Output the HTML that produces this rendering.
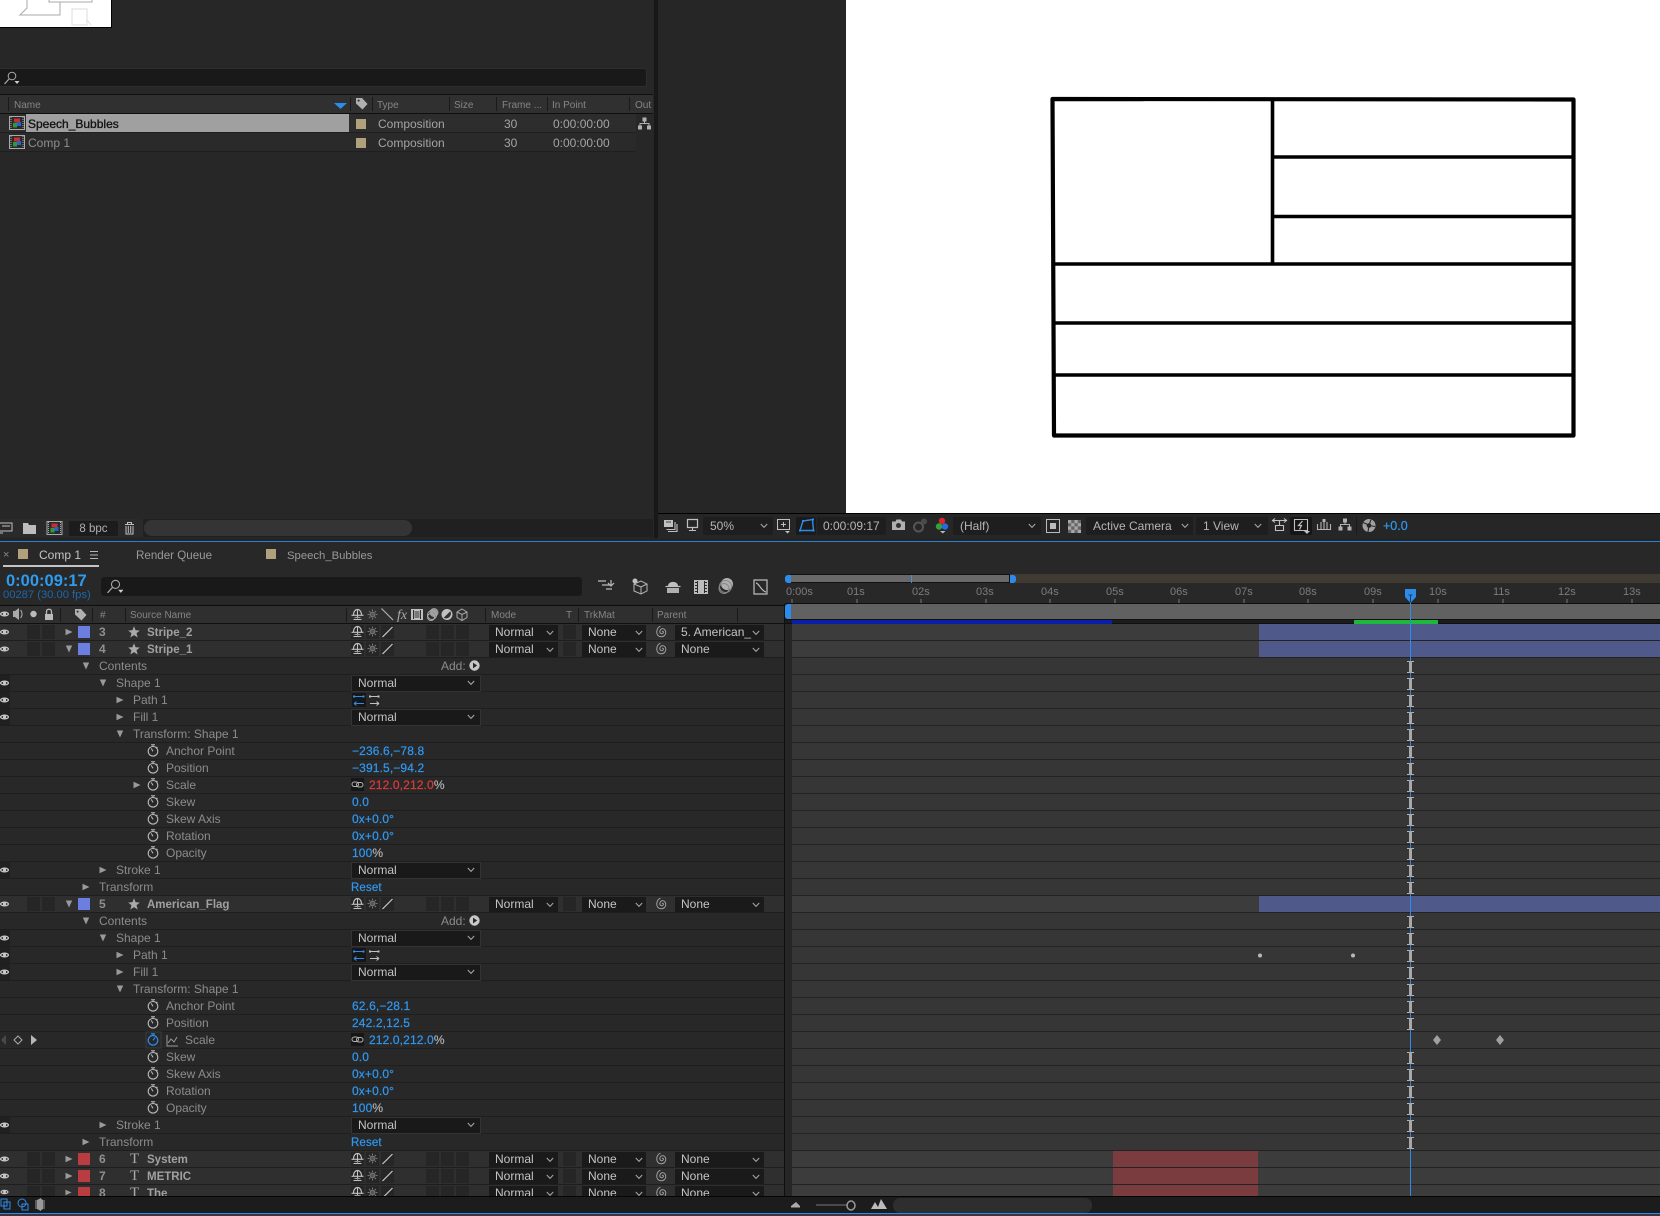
<!DOCTYPE html>
<html><head><meta charset="utf-8"><style>
html,body{margin:0;padding:0;background:#262626}
#p{position:relative;width:1660px;height:1216px;overflow:hidden;background:#262626;font:12px/16px "Liberation Sans",sans-serif;color:#8c8c8c}
#p div,#p span,#p svg{position:absolute}
#p span{white-space:nowrap}
.h{font-size:10px;color:#858585;line-height:18px;top:2px}
.sp{width:1px;height:14px;top:2px;background:#1a1a1a}
.r{left:0;width:784px;height:16px}
.l{background:#2f2f2f}
.t{top:0}
.v{color:#2f98f2;left:352px;top:0;letter-spacing:.13px;-webkit-text-stroke:.2px}
.n{font-weight:bold;font-size:11.5px;color:#a0a0a0;left:147px;top:1px}
.num{font-weight:bold;color:#909090;left:99px;top:0}
.dd{left:351px;width:128px;height:15px;top:0;background:#191919;border:1px solid #333;box-sizing:content-box}
.dd b{position:absolute;left:6px;top:0;font-weight:normal;color:#c4c4c4;line-height:15px}
.bx{height:15px;top:1px;background:#1a1a1a;color:#c4c4c4;line-height:15px;text-indent:6px}
.c{width:13px;height:14px;top:1px;background:#262626}
.sq{width:12px;height:12px;top:2px;left:78px}
.tb{top:517px;height:18px;background:#1e1e1e;border-radius:2px;color:#b5b5b5;line-height:18px}
.tb b{position:absolute;font-weight:normal;white-space:nowrap}
.ti{top:0;left:0;width:1660px;height:1216px}
.rl{top:585px;font-size:11px;color:#7c7c7c;line-height:14px}
</style></head><body><div id="p">

<svg width="0" height="0" style="left:0;top:0"><defs>
<symbol id="eye" viewBox="0 0 10 10"><path d="M0.5 5C2 2.2 8 2.2 9.500 5C8 7.800 2 7.800 0.500 5Z" fill="none" stroke="#c8c8c8" stroke-width="1.400"/><circle cx="5" cy="5" r="1.800" fill="#c8c8c8"/></symbol>
<symbol id="sw" viewBox="0 0 12 13"><circle cx="6" cy="7.300" r="4.800" fill="none" stroke="#b8b8b8" stroke-width="1.100"/><path d="M6 2.500V0.800M4 0.800H8M6 7.300L4.200 4.400M9.500 2.800L10.500 3.800" fill="none" stroke="#b8b8b8" stroke-width="1"/></symbol>
<symbol id="swb" viewBox="0 0 12 13"><circle cx="6" cy="7.300" r="4.800" fill="none" stroke="#2d8ceb" stroke-width="1.200"/><path d="M6 2.500V0.800M4 0.800H8M6 7.300L8.200 4.400" fill="none" stroke="#2d8ceb" stroke-width="1.100"/></symbol>
<symbol id="ra" viewBox="0 0 8 8"><path d="M0.500 0.800L7.500 4L0.500 7.200Z" fill="#9a9a9a"/></symbol>
<symbol id="da" viewBox="0 0 8 8"><path d="M0.800 0.500L7.200 0.500L4 7.500Z" fill="#9a9a9a"/></symbol>
<symbol id="st" viewBox="0 0 12 12"><path d="M6 0.300L7.600 4.300L11.800 4.500L8.500 7.200L9.700 11.500L6 9.100L2.300 11.500L3.500 7.200L0.200 4.500L4.400 4.300Z" fill="#aaa"/></symbol>
<symbol id="ch" viewBox="0 0 8 6"><path d="M0.800 1L4 4.400L7.200 1" fill="none" stroke="#aaa" stroke-width="1"/></symbol>
<symbol id="sh" viewBox="0 0 13 13"><path d="M0.500 7.300H12.500M6.500 1.500V7.300M6.500 7.300V10.500M2.500 11.500H10.500" fill="none" stroke="#c0c0c0" stroke-width="1.100"/><path d="M2.500 7C2.500 3.500 4.500 1.500 6.500 1.500C8.500 1.500 10.500 3.500 10.500 7" fill="none" stroke="#c0c0c0" stroke-width="1.200"/><path d="M3.500 9H9.500V10H3.500Z" fill="#999"/></symbol>
<symbol id="sun" viewBox="0 0 13 13"><circle cx="6.500" cy="6.500" r="2.400" fill="#555" stroke="#777"/><path d="M6.500 1.500V3.300M6.500 9.700V11.500M1.500 6.500H3.300M9.700 6.500H11.500M3 3L4.300 4.300M8.700 8.700L10 10M3 10L4.300 8.700M8.700 4.300L10 3" stroke="#777"/></symbol>
<symbol id="sl" viewBox="0 0 13 13"><path d="M1.500 12L11.500 2" stroke="#c8c8c8" stroke-width="1.200"/></symbol>
<symbol id="spi" viewBox="0 0 12 13"><path d="M6 6.500C6.800 5.800 7.800 6.600 7.300 7.800C6.600 9.200 4.400 9 3.900 7.200C3.400 5 5.400 3.200 7.400 3.800C10.200 4.800 10.400 8.400 8.600 10.400C6.800 12.300 3 12.100 1.600 10C-0.200 7 1 2.500 4.500 1.200" fill="none" stroke="#a0a0a0" stroke-width="1"/></symbol>
<symbol id="ib" viewBox="0 0 7 12"><path d="M0 0.500H7M0 11.500H7" fill="none" stroke="#b4b4b4" stroke-width="1"/><rect x="2" y="0" width="3" height="12" fill="#a8a8a8"/></symbol>
<symbol id="cmp" viewBox="0 0 16 14"><rect x="0.500" y="0.500" width="15" height="13" fill="#2a2a2a" stroke="#aaa"/><path d="M2 1V13M14 1V13" stroke="#aaa" stroke-dasharray="1 1"/><rect x="5" y="2.500" width="6" height="4" fill="#c53030"/><rect x="4" y="7" width="4" height="4.500" fill="#2c9a3c"/><rect x="8" y="6" width="4" height="4" fill="#2a5fcf"/></symbol>
<symbol id="tag" viewBox="0 0 13 13"><path d="M1 1H7L12.500 7L7.500 12.500L1 6.500Z" fill="#b0b0b0"/><circle cx="3.600" cy="3.600" r="1" fill="#2d2d2d"/></symbol>
<symbol id="pth" viewBox="0 0 29 14"><rect width="14" height="14" fill="#161616"/><rect x="16" width="13" height="14" fill="#262626"/><path d="M2 3.500H12M2 10.500H12M2 10.500L4.500 8.500M2 10.500L4.500 12.500" fill="none" stroke="#2d8ceb"/><rect x="1" y="2.500" width="2" height="2" fill="#2d8ceb"/><rect x="10.500" y="2.500" width="2" height="2" fill="#2d8ceb"/><path d="M18 3.500H27M18 10.500H27M27 10.500L24.500 8.500M27 10.500L24.500 12.500" fill="none" stroke="#c0c0c0"/><rect x="17" y="2.500" width="2" height="2" fill="#c0c0c0"/><rect x="25.500" y="2.500" width="2" height="2" fill="#c0c0c0"/></symbol>
<symbol id="lnk" viewBox="0 0 13 13"><rect width="13" height="13" fill="#161616"/><rect x="1" y="4" width="6.500" height="4.500" rx="2.200" fill="none" stroke="#b0b0b0" stroke-width="1"/><rect x="5.500" y="4.500" width="6.500" height="4.500" rx="2.200" fill="none" stroke="#b0b0b0" stroke-width="1"/></symbol>
<symbol id="add" viewBox="0 0 11 11"><circle cx="5.500" cy="5.500" r="5.200" fill="#c8c8c8"/><path d="M4 2.600L8.200 5.500L4 8.400Z" fill="#282828"/></symbol>
<symbol id="srch" viewBox="0 0 16 14"><circle cx="8" cy="5" r="3.800" fill="none" stroke="#aaa"/><path d="M5 8L0.500 13" stroke="#aaa" stroke-width="1.200"/><path d="M10.500 10H15.500L13 13Z" fill="#ccc"/></symbol>
<symbol id="net" viewBox="0 0 13 13"><path d="M4.500 0.500H8.500V4.500H4.500ZM0 8.500H4V12.500H0ZM9 8.500H13V12.500H9Z" fill="#b0b0b0"/><path d="M6.500 4.500V6.500H2V8.500M6.500 6.500H11V8.500" fill="none" stroke="#b0b0b0"/></symbol>
</defs></svg>

<!-- project panel -->
<div style="left:0;top:0;width:654px;height:519px;background:#272727"></div>
<div style="left:0;top:0;width:111px;height:27px;background:#fff;border:solid #000;border-width:0 1px 1px 0"></div>
<svg style="left:0;top:0" width="110" height="26"><path d="M49 0V2H92V0M60 2V15H20L27 8V0" fill="none" stroke="#aaa"/><path d="M72 9H87V25H72Z M87 20L91 25" fill="none" stroke="#ddd"/></svg>
<div style="left:0;top:68px;width:647px;height:19px;background:#191919;border-radius:0 3px 3px 0;border:solid #2e2e2e;border-width:1px 1px 1px 0;box-sizing:border-box"></div>
<svg style="left:4px;top:71px" width="16" height="14"><use href="#srch"/></svg>

<div style="left:0;top:94px;width:653px;height:20px;background:#303030;border:solid #0f0f0f;border-width:1px 0;box-sizing:border-box">
<div class="sp" style="left:8px"></div><span class="h" style="left:14px">Name</span>
<div class="sp" style="left:350px"></div><div class="sp" style="left:372px"></div><span class="h" style="left:377px">Type</span>
<div class="sp" style="left:449px"></div><span class="h" style="left:454px">Size</span>
<div class="sp" style="left:496px"></div><span class="h" style="left:502px">Frame ...</span>
<div class="sp" style="left:547px"></div><span class="h" style="left:552px">In Point</span>
<div class="sp" style="left:629px"></div><span class="h" style="left:635px">Out</span>
</div>
<svg style="left:334px;top:103px" width="13" height="6"><path d="M0 0H13L6.500 6Z" fill="#2d8ceb"/></svg>
<svg style="left:355px;top:97px" width="13" height="13"><use href="#tag"/></svg>

<div style="left:0;top:114px;width:636px;height:18px;background:#2d2d2d"></div>
<div style="left:0;top:133px;width:636px;height:18px;background:#2a2a2a"></div>
<div style="left:0;top:132px;width:636px;height:1px;background:#1f1f1f"></div>
<div style="left:0;top:151px;width:636px;height:1px;background:#1f1f1f"></div>
<div style="left:26px;top:114px;width:323px;height:18px;background:#a0a0a0"></div>
<div style="left:356px;top:119px;width:10px;height:10px;background:#b0a07c"></div>
<div style="left:356px;top:138px;width:10px;height:10px;background:#b0a07c"></div>
<svg style="left:9px;top:116px" width="16" height="14"><use href="#cmp"/></svg>
<svg style="left:9px;top:135px" width="16" height="14"><use href="#cmp"/></svg>
<span style="left:28px;top:116px;color:#141414;-webkit-text-stroke:.35px #141414;line-height:16px">Speech_Bubbles</span>
<span style="left:28px;top:135px;color:#8e8e8e">Comp 1</span>
<span style="left:378px;top:116px;color:#a4a4a4">Composition</span><span style="left:378px;top:135px;color:#a4a4a4">Composition</span>
<span style="left:504px;top:116px;color:#a4a4a4">30</span><span style="left:504px;top:135px;color:#a4a4a4">30</span>
<span style="left:553px;top:116px;color:#a4a4a4">0:00:00:00</span><span style="left:553px;top:135px;color:#a4a4a4">0:00:00:00</span>
<svg style="left:638px;top:117px" width="13" height="13"><use href="#net"/></svg>
<div style="left:654px;top:0;width:4px;height:541px;background:#181818"></div>

<!-- project bottom bar -->
<div style="left:0;top:519px;width:653px;height:18px;background:#202020"></div>
<div style="left:0;top:519px;width:143px;height:18px;background:#2a2a2a"></div>
<div style="left:144px;top:520px;width:268px;height:16px;background:#343434;border-radius:8px"></div>
<svg style="left:0;top:520px" width="140" height="16">
<path d="M0 3H12V11H0M0 13H3" fill="none" stroke="#c0c0c0"/><path d="M2 6H10" stroke="#c0c0c0"/><path d="M23 3H28L29 5H36V14H23Z" fill="#bdbdbd"/>
<use href="#cmp" x="46" y="1" width="17" height="14"/>
<path d="M125 4.500H134M127.500 4.500V2.500H131.500V4.500M126 6V14H133V6M128.300 6V13M130.700 6V13" fill="none" stroke="#c0c0c0"/></svg>
<div style="left:69px;top:521px;width:49px;height:15px;background:#1c1c1c;border-radius:2px;color:#b0b0b0;text-align:center;line-height:16px;font-size:11.500px">8 bpc</div>

<!-- viewer -->
<div style="left:658px;top:0;width:188px;height:513px;background:#262626"></div>
<div style="left:846px;top:0;width:814px;height:513px;background:#fff"></div>
<svg style="left:846px;top:0" width="814" height="513">
<path d="M206.500 99L727.500 99.500V435.500L208 435.500Z" fill="none" stroke="#000" stroke-width="4.200" stroke-linejoin="round"/>
<path d="M426.500 99V264M427 157H728M427 216.500H728M208 264H728M208 323H728M208 375H728" fill="none" stroke="#000" stroke-width="3.600"/>
</svg>

<!-- viewer toolbar -->
<div style="left:658px;top:513px;width:1002px;height:1px;background:#000"></div>
<div style="left:658px;top:514px;width:1002px;height:24px;background:#262626"></div>
<div class="tb" style="left:703px;width:70px"><b style="left:7px">50%</b></div>
<div class="tb" style="left:796px;width:20px;background:#1a1a1a"></div>
<div class="tb" style="left:817px;width:69px"><b style="left:6px">0:00:09:17</b></div>
<div class="tb" style="left:953px;width:88px"><b style="left:7px">(Half)</b></div>
<div class="tb" style="left:1086px;width:107px"><b style="left:7px">Active Camera</b></div>
<div class="tb" style="left:1196px;width:72px"><b style="left:7px">1 View</b></div>
<div class="tb" style="left:1290px;width:22px;background:#161616"></div>
<span style="left:1383px;top:518px;color:#2f98f2;line-height:16px;font-size:12.500px;-webkit-text-stroke:.2px">+0.0</span>
<svg class="ti" width="1660" height="1216">
<path d="M664 520H673V527H664Z" fill="#c0c0c0"/><path d="M666 522H671" stroke="#444"/><path d="M675 522V529.500H666.500M677 524V531.500H668" fill="none" stroke="#c0c0c0" stroke-width="1.100"/>
<path d="M687.500 519.500H697.500V527.500H687.500Z" fill="none" stroke="#c0c0c0" stroke-width="1.200"/><path d="M692.500 528V530M689 530.500H696" stroke="#c0c0c0" stroke-width="1.100"/>
<path d="M777.500 519.500H789.500V529.500H777.500ZM783.500 522V527M781 524.500H786" fill="none" stroke="#c0c0c0" stroke-width="1"/><path d="M785 531H790L787.500 533.500Z" fill="#c0c0c0"/>
<path d="M800 530.500L803 521L812.500 519.500L813.500 530.500Z" fill="none" stroke="#2d8ceb" stroke-width="1.400"/><rect x="799" y="529.500" width="2" height="2" fill="#2d8ceb"/><rect x="802" y="520" width="2" height="2" fill="#2d8ceb"/><rect x="812" y="518.500" width="2" height="2" fill="#2d8ceb"/><rect x="812.500" y="529.500" width="2" height="2" fill="#2d8ceb"/>
<path d="M892 521.500H895.500L896.500 519.500H901L902 521.500H905V530H892Z" fill="#b0b0b0"/><circle cx="898.500" cy="525.500" r="2.500" fill="#303030"/>
<circle cx="918.500" cy="527" r="4.500" fill="none" stroke="#555" stroke-width="2"/><circle cx="924" cy="521.500" r="3" fill="#4a4a4a"/>
<circle cx="942" cy="521" r="3.200" fill="#d8262a"/><circle cx="939" cy="526.500" r="3.200" fill="#2ca63c"/><circle cx="945" cy="526.500" r="3.200" fill="#2a6ae0"/><path d="M940 531H945.500L942.800 533.500Z" fill="#bbb"/>
<path d="M1046.500 519.500H1059.500V532.500H1046.500Z" fill="none" stroke="#bbb"/><rect x="1050" y="523" width="6" height="6" fill="#bbb"/>
<rect x="1068" y="520" width="13" height="13" fill="#666"/><path d="M1068 520H1071.200V523.200H1068ZM1074.500 520H1077.700V523.200H1074.500ZM1071.200 523.200H1074.500V526.400H1071.200ZM1077.700 523.200H1081V526.400H1077.700ZM1068 526.400H1071.200V529.700H1068ZM1074.500 526.400H1077.700V529.700H1074.500ZM1071.200 529.700H1074.500V533H1071.200ZM1077.700 529.700H1081V533H1077.700Z" fill="#a8a8a8"/>
<path d="M1272 520.500H1287M1275 518.500L1272.500 520.500L1275 522.500M1284 518.500L1286.500 520.500L1284 522.500M1279.500 521V525M1275.500 525.500H1283.500V530.500H1275.500Z" fill="none" stroke="#c0c0c0" stroke-width="1.100"/>
<path d="M1294.500 519.500H1307.500V530.500H1294.500Z" fill="none" stroke="#c0c0c0" stroke-width="1.100"/><path d="M1302.500 521L1298.500 525.500H1301.500L1299.500 529.500" fill="none" stroke="#c0c0c0" stroke-width="1.200"/><path d="M1304 531H1310L1307 534Z" fill="#c0c0c0"/>
<path d="M1317.500 524V529.500H1330.500V524M1321 522V529M1324 519.500V529M1327 522V529" fill="none" stroke="#b4b4b4" stroke-width="1.100"/><rect x="1322.500" y="519" width="3" height="3" fill="#b4b4b4"/>
<use href="#net" x="1338" y="518" width="14" height="13"/>
<rect x="1356" y="517" width="1" height="18" fill="#1a1a1a"/>
<circle cx="1369" cy="525.500" r="6.500" fill="#a0a0a0"/><circle cx="1369" cy="525.500" r="2.300" fill="#262626"/><path d="M1363 522.500L1370 525.500M1371 519.500L1369 525.500M1375 526.500L1369 525.500M1368 532L1369 525.500" stroke="#262626" stroke-width="1.100"/>
<use href="#ch" x="760" y="523" width="8" height="6"/><use href="#ch" x="1028" y="523" width="8" height="6"/><use href="#ch" x="1181" y="523" width="8" height="6"/><use href="#ch" x="1254" y="523" width="8" height="6"/>
</svg>

<!-- separators -->
<div style="left:0;top:538px;width:1660px;height:3px;background:#242424"></div>
<div style="left:0;top:541px;width:1660px;height:1px;background:#2d7fcf"></div>

<!-- tabs -->
<div style="left:0;top:542px;width:1660px;height:62px;background:#282828"></div>
<span style="left:3px;top:547px;color:#888;font-size:11px">×</span>
<div style="left:18px;top:549px;width:10px;height:10px;background:#b0a07c"></div>
<span style="left:39px;top:547px;color:#c4c4c4;font-size:12px">Comp 1</span>
<svg style="left:89px;top:550px" width="10" height="10"><path d="M1 1.500H9M1 5H9M1 8.500H9" stroke="#b5b5b5"/></svg>
<div style="left:3px;top:565px;width:96px;height:2px;background:#c4c4c4"></div>
<span style="left:136px;top:548px;color:#999;font-size:11.600px">Render Queue</span>
<div style="left:266px;top:549px;width:10px;height:10px;background:#b0a07c"></div>
<span style="left:287px;top:548px;color:#999;font-size:11.300px">Speech_Bubbles</span>

<!-- time + search -->
<span style="left:6px;top:571px;color:#2d9cf0;font-weight:bold;font-size:16.500px;line-height:20px">0:00:09:17</span>
<span style="left:3px;top:587px;color:#1c68ac;font-size:11.200px;line-height:16px">00287 (30.00 fps)</span>
<div style="left:101px;top:577px;width:481px;height:19px;background:#191919;border-radius:3px"></div>
<svg style="left:107px;top:579px" width="17" height="15"><use href="#srch"/></svg>
<svg style="left:598px;top:576px" width="172" height="20">
<path d="M0 5H8M4 9H12M8 13H14M13 4V10M10 7L13 10L16 7" fill="none" stroke="#bbb" stroke-width="1.200"/>
<path d="M36 8L43 5L49 8V15L43 18L36 15ZM36 8L43 11L49 8M43 11V18" fill="none" stroke="#b5b5b5"/><circle cx="37" cy="5" r="2.500" fill="#c0c0c0"/>
<path d="M70 10C70 4.500 80 4.500 80 10Z" fill="#c0c0c0"/><path d="M67.500 10.500H82.500" stroke="#c0c0c0" stroke-width="1.200"/><path d="M69 12H81V17H69Z" fill="#b0b0b0"/>
<path d="M96 4H110V18H96Z" fill="#bcbcbc"/><path d="M99.500 5V17M106.500 5V17" stroke="#282828"/><path d="M97 6.500H99M97 9.500H99M97 12.500H99M97 15.500H99M107 6.500H109M107 9.500H109M107 12.500H109M107 15.500H109" stroke="#282828"/>
<circle cx="129" cy="8" r="6" fill="#b0b0b0"/><circle cx="127.500" cy="10.500" r="6" fill="none" stroke="#888"/><circle cx="126" cy="12.500" r="5" fill="none" stroke="#888"/>
<path d="M156 4H169V18H156ZM158 7C161 7 163 15 168 16" fill="none" stroke="#bdbdbd" stroke-width="1.200"/>
</svg>

<!-- column header -->
<div style="left:0;top:605px;width:784px;height:18px;background:#2f2f2f;border-top:1px solid #0f0f0f;box-sizing:content-box"></div>
<div style="left:0;top:623px;width:1660px;height:1px;background:#0f0f0f"></div>
<svg style="left:0;top:606px" width="784" height="17">
<use href="#eye" x="0" y="3" width="9" height="10"/>
<path d="M13 5H15L19 2V14L15 11H13Z" fill="#aaa"/><path d="M20.500 4C22.500 6 22.500 10 20.500 12" fill="none" stroke="#aaa"/>
<circle cx="33.500" cy="8" r="3.200" fill="#bbb"/>
<path d="M45 8H53V14H45Z" fill="#bbb"/><path d="M46.500 8V5.500C46.500 2.500 51.500 2.500 51.500 5.500V8" fill="none" stroke="#bbb" stroke-width="1.300"/>
<use href="#tag" x="74" y="2" width="13" height="13"/>
<rect x="60" y="2" width="1" height="14" fill="#1a1a1a"/><rect x="92" y="2" width="1" height="14" fill="#1a1a1a"/><rect x="125" y="2" width="1" height="14" fill="#1a1a1a"/><rect x="346" y="2" width="1" height="14" fill="#1a1a1a"/><rect x="485" y="2" width="1" height="14" fill="#1a1a1a"/><rect x="578" y="2" width="1" height="14" fill="#1a1a1a"/><rect x="652" y="2" width="1" height="14" fill="#1a1a1a"/><rect x="737" y="2" width="1" height="14" fill="#1a1a1a"/>
<use href="#sh" x="351" y="2" width="13" height="13"/><use href="#sun" x="366" y="2" width="13" height="13"/>
<path d="M382 3L393 14M381.500 2.500L384 5M390.500 11.500L393 14" stroke="#b0b0b0" stroke-width="1.200"/>
<text x="397" y="13" font-family="'Liberation Serif',serif" font-style="italic" font-size="14" fill="#aaa">fx</text>
<path d="M411 3H423V14H411Z" fill="#c0c0c0"/><path d="M413.500 4V13M420.500 4V13" stroke="#2f2f2f"/><path d="M414.500 5H419.500V12H414.500Z" fill="#777"/>
<circle cx="434" cy="6.500" r="4.500" fill="#999"/><circle cx="432" cy="9" r="4.500" fill="none" stroke="#aaa"/><circle cx="431" cy="11" r="3.500" fill="none" stroke="#aaa"/>
<circle cx="447" cy="8.500" r="5" fill="#c0c0c0"/><path d="M450.500 5L443.500 12C447 13.500 452.500 11 450.500 5Z" fill="#2f2f2f"/><circle cx="447" cy="8.500" r="5" fill="none" stroke="#c0c0c0"/>
<path d="M462 3L467 6V11.500L462 14.500L457 11.500V6ZM457 6L462 8.500L467 6M462 8.500V14.500" fill="none" stroke="#aaa"/>
</svg>
<span class="h" style="left:100px;top:607px">#</span>
<span class="h" style="left:130px;top:607px">Source Name</span>
<span class="h" style="left:491px;top:607px">Mode</span>
<span class="h" style="left:566px;top:607px">T</span>
<span class="h" style="left:584px;top:607px">TrkMat</span>
<span class="h" style="left:657px;top:607px">Parent</span>

<!-- timeline navigator -->
<div style="left:790px;top:574px;width:870px;height:9px;background:#3f3b32"></div>
<div style="left:790px;top:574px;width:220px;height:9px;background:#696969;border:1px solid #111;box-sizing:border-box"></div>
<div style="left:785px;top:575px;width:6px;height:8px;background:#2d8ceb;border-radius:3px 0 0 3px"></div>
<div style="left:1010px;top:575px;width:6px;height:8px;background:#2d8ceb;border-radius:0 3px 3px 0"></div>
<div style="left:911px;top:575px;width:1px;height:8px;background:#4a90cf"></div>
<span class="rl" style="left:786px">0:00s</span><span class="rl" style="left:847px">01s</span><span class="rl" style="left:912px">02s</span><span class="rl" style="left:976px">03s</span><span class="rl" style="left:1041px">04s</span><span class="rl" style="left:1106px">05s</span><span class="rl" style="left:1170px">06s</span><span class="rl" style="left:1235px">07s</span><span class="rl" style="left:1299px">08s</span><span class="rl" style="left:1364px">09s</span><span class="rl" style="left:1429px">10s</span><span class="rl" style="left:1493px">11s</span><span class="rl" style="left:1558px">12s</span><span class="rl" style="left:1623px">13s</span>
<svg style="left:0;top:0" width="1660" height="604"><path d="M792 599V603M857 599V603M921 599V603M986 599V603M1050 599V603M1115 599V603M1179 599V603M1244 599V603M1308 599V603M1373 599V603M1438 599V603M1503 599V603M1567 599V603M1632 599V603" stroke="#7a7a7a" stroke-width="1"/></svg>
<div style="left:785px;top:603px;width:875px;height:1px;background:#0f0f0f"></div>
<div style="left:791px;top:604px;width:869px;height:15px;background:#616161"></div>
<div style="left:785px;top:604px;width:6px;height:15px;background:#2d8ceb;border-radius:3px 0 0 3px"></div>
<div style="left:785px;top:619px;width:875px;height:1px;background:#0f0f0f"></div>
<div style="left:785px;top:620px;width:875px;height:3px;background:#1c1c1c"></div>

<!-- left rows background -->
<div style="left:0;top:624px;width:784px;height:572px;background:repeating-linear-gradient(#282828 0,#282828 16px,#1e1e1e 16px,#1e1e1e 17px)"></div>
<!-- track rows background -->
<div style="left:784px;top:604px;width:1px;height:592px;background:#0f0f0f"></div>
<div style="left:785px;top:624px;width:7px;height:572px;background:#262626"></div>
<div style="left:792px;top:624px;width:868px;height:572px;background:repeating-linear-gradient(#363636 0,#363636 16px,#232323 16px,#232323 17px)"></div>
<div style="left:792px;top:620px;width:320px;height:4px;background:#0a1fa8"></div>
<div style="left:1354px;top:620px;width:84px;height:4px;background:#1eb83e"></div>

<div style="left:792px;top:624px;width:868px;height:16px;background:#3c3c3c"></div>
<div style="left:792px;top:641px;width:868px;height:16px;background:#3c3c3c"></div>
<div style="left:792px;top:896px;width:868px;height:16px;background:#3c3c3c"></div>
<div style="left:792px;top:1151px;width:868px;height:16px;background:#3c3c3c"></div>
<div style="left:792px;top:1168px;width:868px;height:16px;background:#3c3c3c"></div>
<div style="left:792px;top:1185px;width:868px;height:11px;background:#3c3c3c"></div>
<div style="left:1259px;top:624px;width:401px;height:16px;background:#505a8a"></div>
<div style="left:1259px;top:641px;width:401px;height:16px;background:#505a8a"></div>
<div style="left:1259px;top:896px;width:401px;height:16px;background:#505a8a"></div>
<div style="left:1113px;top:1151px;width:145px;height:16px;background:#7a3c3e"></div>
<div style="left:1113px;top:1168px;width:145px;height:16px;background:#7a3c3e"></div>
<div style="left:1113px;top:1185px;width:145px;height:11px;background:#7a3c3e"></div>

<!-- track overlay -->
<svg class="ti" width="1660" height="1216">
<rect x="1410" y="603" width="1" height="593" fill="#2d8ceb"/>
<use href="#ib" x="1407" y="661" width="7" height="12"/><use href="#ib" x="1407" y="678" width="7" height="12"/><use href="#ib" x="1407" y="695" width="7" height="12"/><use href="#ib" x="1407" y="712" width="7" height="12"/><use href="#ib" x="1407" y="729" width="7" height="12"/><use href="#ib" x="1407" y="746" width="7" height="12"/><use href="#ib" x="1407" y="763" width="7" height="12"/><use href="#ib" x="1407" y="780" width="7" height="12"/><use href="#ib" x="1407" y="797" width="7" height="12"/><use href="#ib" x="1407" y="814" width="7" height="12"/><use href="#ib" x="1407" y="831" width="7" height="12"/><use href="#ib" x="1407" y="848" width="7" height="12"/><use href="#ib" x="1407" y="865" width="7" height="12"/><use href="#ib" x="1407" y="882" width="7" height="12"/>
<use href="#ib" x="1407" y="916" width="7" height="12"/><use href="#ib" x="1407" y="933" width="7" height="12"/><use href="#ib" x="1407" y="950" width="7" height="12"/><use href="#ib" x="1407" y="967" width="7" height="12"/><use href="#ib" x="1407" y="984" width="7" height="12"/><use href="#ib" x="1407" y="1001" width="7" height="12"/><use href="#ib" x="1407" y="1018" width="7" height="12"/>
<use href="#ib" x="1407" y="1052" width="7" height="12"/><use href="#ib" x="1407" y="1069" width="7" height="12"/><use href="#ib" x="1407" y="1086" width="7" height="12"/><use href="#ib" x="1407" y="1103" width="7" height="12"/><use href="#ib" x="1407" y="1120" width="7" height="12"/><use href="#ib" x="1407" y="1137" width="7" height="12"/>
<circle cx="1260" cy="955.500" r="2" fill="#b8b8b8"/><circle cx="1353" cy="955.500" r="2" fill="#b8b8b8"/>
<path d="M1437 1035L1441 1040L1437 1045L1433 1040Z" fill="#a0a0a0"/><path d="M1500 1035L1504 1040L1500 1045L1496 1040Z" fill="#a0a0a0"/>
<path d="M1405 589H1416V597L1410.500 603L1405 597Z" fill="#2d8ceb"/><path d="M1408.500 595H1412.500M1410.500 595V602" stroke="#1a3a5c"/>
</svg>

<!-- rows -->
<div class="r l" style="top:624px"><div class="c" style="left:27px"></div><div class="c" style="left:42px"></div><div class="sq" style="background:#6c7ee0"></div><span class="num">3</span><span class="n">Stripe_2</span><div class="c" style="left:351px"></div><div class="c" style="left:366px"></div><div class="c" style="left:381px"></div><div class="c" style="left:426px"></div><div class="c" style="left:441px"></div><div class="c" style="left:456px"></div><div class="bx" style="left:489px;width:69px">Normal</div><div class="c" style="left:563px"></div><div class="bx" style="left:582px;width:64px">None</div><div class="bx" style="left:675px;width:89px">5. American_</div></div>
<div class="r l" style="top:641px"><div class="c" style="left:27px"></div><div class="c" style="left:42px"></div><div class="sq" style="background:#6c7ee0"></div><span class="num">4</span><span class="n">Stripe_1</span><div class="c" style="left:351px"></div><div class="c" style="left:366px"></div><div class="c" style="left:381px"></div><div class="c" style="left:426px"></div><div class="c" style="left:441px"></div><div class="c" style="left:456px"></div><div class="bx" style="left:489px;width:69px">Normal</div><div class="c" style="left:563px"></div><div class="bx" style="left:582px;width:64px">None</div><div class="bx" style="left:675px;width:89px">None</div></div>
<div class="r" style="top:658px"><span class="t" style="left:99px">Contents</span><span class="t" style="left:441px">Add:</span></div>
<div class="r" style="top:675px"><span class="t" style="left:116px">Shape 1</span><div class="dd"><b>Normal</b></div></div>
<div class="r" style="top:692px"><span class="t" style="left:133px">Path 1</span></div>
<div class="r" style="top:709px"><span class="t" style="left:133px">Fill 1</span><div class="dd"><b>Normal</b></div></div>
<div class="r" style="top:726px"><span class="t" style="left:133px">Transform: Shape 1</span></div>
<div class="r" style="top:743px"><span class="t" style="left:166px">Anchor Point</span><span class="v">−236.6,−78.8</span></div>
<div class="r" style="top:760px"><span class="t" style="left:166px">Position</span><span class="v">−391.5,−94.2</span></div>
<div class="r" style="top:777px"><span class="t" style="left:166px">Scale</span><span class="v" style="left:369px;color:#e03a3a">212.0,212.0<span style="position:static;color:#b0b0b0">%</span></span></div>
<div class="r" style="top:794px"><span class="t" style="left:166px">Skew</span><span class="v">0.0</span></div>
<div class="r" style="top:811px"><span class="t" style="left:166px">Skew Axis</span><span class="v">0x+0.0°</span></div>
<div class="r" style="top:828px"><span class="t" style="left:166px">Rotation</span><span class="v">0x+0.0°</span></div>
<div class="r" style="top:845px"><span class="t" style="left:166px">Opacity</span><span class="v">100<span style="position:static;color:#b0b0b0">%</span></span></div>
<div class="r" style="top:862px"><span class="t" style="left:116px">Stroke 1</span><div class="dd"><b>Normal</b></div></div>
<div class="r" style="top:879px"><span class="t" style="left:99px">Transform</span><span class="v" style="left:351px;top:1px;font-size:11.500px">Reset</span></div>
<div class="r l" style="top:896px"><div class="c" style="left:27px"></div><div class="c" style="left:42px"></div><div class="sq" style="background:#6c7ee0"></div><span class="num">5</span><span class="n">American_Flag</span><div class="c" style="left:351px"></div><div class="c" style="left:366px"></div><div class="c" style="left:381px"></div><div class="c" style="left:426px"></div><div class="c" style="left:441px"></div><div class="c" style="left:456px"></div><div class="bx" style="left:489px;width:69px">Normal</div><div class="c" style="left:563px"></div><div class="bx" style="left:582px;width:64px">None</div><div class="bx" style="left:675px;width:89px">None</div></div>
<div class="r" style="top:913px"><span class="t" style="left:99px">Contents</span><span class="t" style="left:441px">Add:</span></div>
<div class="r" style="top:930px"><span class="t" style="left:116px">Shape 1</span><div class="dd"><b>Normal</b></div></div>
<div class="r" style="top:947px"><span class="t" style="left:133px">Path 1</span></div>
<div class="r" style="top:964px"><span class="t" style="left:133px">Fill 1</span><div class="dd"><b>Normal</b></div></div>
<div class="r" style="top:981px"><span class="t" style="left:133px">Transform: Shape 1</span></div>
<div class="r" style="top:998px"><span class="t" style="left:166px">Anchor Point</span><span class="v">62.6,−28.1</span></div>
<div class="r" style="top:1015px"><span class="t" style="left:166px">Position</span><span class="v">242.2,12.5</span></div>
<div class="r" style="top:1032px"><span class="t" style="left:185px">Scale</span><span class="v" style="left:369px">212.0,212.0<span style="position:static;color:#b0b0b0">%</span></span></div>
<div class="r" style="top:1049px"><span class="t" style="left:166px">Skew</span><span class="v">0.0</span></div>
<div class="r" style="top:1066px"><span class="t" style="left:166px">Skew Axis</span><span class="v">0x+0.0°</span></div>
<div class="r" style="top:1083px"><span class="t" style="left:166px">Rotation</span><span class="v">0x+0.0°</span></div>
<div class="r" style="top:1100px"><span class="t" style="left:166px">Opacity</span><span class="v">100<span style="position:static;color:#b0b0b0">%</span></span></div>
<div class="r" style="top:1117px"><span class="t" style="left:116px">Stroke 1</span><div class="dd"><b>Normal</b></div></div>
<div class="r" style="top:1134px"><span class="t" style="left:99px">Transform</span><span class="v" style="left:351px;top:1px;font-size:11.500px">Reset</span></div>
<div class="r l" style="top:1151px"><div class="c" style="left:27px"></div><div class="c" style="left:42px"></div><div class="sq" style="background:#b83c40"></div><span class="num">6</span><span class="t" style="left:130px;font:15px/16px 'Liberation Serif',serif;color:#aaa">T</span><span class="n">System</span><div class="c" style="left:351px"></div><div class="c" style="left:366px"></div><div class="c" style="left:381px"></div><div class="c" style="left:426px"></div><div class="c" style="left:441px"></div><div class="c" style="left:456px"></div><div class="bx" style="left:489px;width:69px">Normal</div><div class="c" style="left:563px"></div><div class="bx" style="left:582px;width:64px">None</div><div class="bx" style="left:675px;width:89px">None</div></div>
<div class="r l" style="top:1168px"><div class="c" style="left:27px"></div><div class="c" style="left:42px"></div><div class="sq" style="background:#b83c40"></div><span class="num">7</span><span class="t" style="left:130px;font:15px/16px 'Liberation Serif',serif;color:#aaa">T</span><span class="n">METRIC</span><div class="c" style="left:351px"></div><div class="c" style="left:366px"></div><div class="c" style="left:381px"></div><div class="c" style="left:426px"></div><div class="c" style="left:441px"></div><div class="c" style="left:456px"></div><div class="bx" style="left:489px;width:69px">Normal</div><div class="c" style="left:563px"></div><div class="bx" style="left:582px;width:64px">None</div><div class="bx" style="left:675px;width:89px">None</div></div>
<div class="r l" style="top:1185px"><div class="c" style="left:27px"></div><div class="c" style="left:42px"></div><div class="sq" style="background:#b83c40"></div><span class="num">8</span><span class="t" style="left:130px;font:15px/16px 'Liberation Serif',serif;color:#aaa">T</span><span class="n">The</span><div class="c" style="left:351px"></div><div class="c" style="left:366px"></div><div class="c" style="left:381px"></div><div class="c" style="left:426px"></div><div class="c" style="left:441px"></div><div class="c" style="left:456px"></div><div class="bx" style="left:489px;width:69px">Normal</div><div class="c" style="left:563px"></div><div class="bx" style="left:582px;width:64px">None</div><div class="bx" style="left:675px;width:89px">None</div></div>

<!-- left icons overlay -->
<svg class="ti" width="800" height="1216">
<g>
<rect x="0" y="675" width="10" height="16" fill="#202020"/><rect x="0" y="692" width="10" height="16" fill="#202020"/><rect x="0" y="709" width="10" height="16" fill="#202020"/><rect x="0" y="862" width="10" height="16" fill="#202020"/><rect x="0" y="930" width="10" height="16" fill="#202020"/><rect x="0" y="947" width="10" height="16" fill="#202020"/><rect x="0" y="964" width="10" height="16" fill="#202020"/><rect x="0" y="1117" width="10" height="16" fill="#202020"/>
<use href="#eye" x="0" y="627" width="9" height="10"/><use href="#eye" x="0" y="644" width="9" height="10"/><use href="#eye" x="0" y="678" width="9" height="10"/><use href="#eye" x="0" y="695" width="9" height="10"/><use href="#eye" x="0" y="712" width="9" height="10"/><use href="#eye" x="0" y="865" width="9" height="10"/><use href="#eye" x="0" y="899" width="9" height="10"/><use href="#eye" x="0" y="933" width="9" height="10"/><use href="#eye" x="0" y="950" width="9" height="10"/><use href="#eye" x="0" y="967" width="9" height="10"/><use href="#eye" x="0" y="1120" width="9" height="10"/><use href="#eye" x="0" y="1154" width="9" height="10"/><use href="#eye" x="0" y="1171" width="9" height="10"/><use href="#eye" x="0" y="1188" width="9" height="8"/>
</g>
<use href="#ra" x="65" y="628" width="8" height="8"/><use href="#da" x="65" y="645" width="8" height="8"/><use href="#da" x="82" y="662" width="8" height="8"/><use href="#da" x="99" y="679" width="8" height="8"/><use href="#ra" x="116" y="696" width="8" height="8"/><use href="#ra" x="116" y="713" width="8" height="8"/><use href="#da" x="116" y="730" width="8" height="8"/><use href="#ra" x="133" y="781" width="8" height="8"/><use href="#ra" x="99" y="866" width="8" height="8"/><use href="#ra" x="82" y="883" width="8" height="8"/>
<use href="#da" x="65" y="900" width="8" height="8"/><use href="#da" x="82" y="917" width="8" height="8"/><use href="#da" x="99" y="934" width="8" height="8"/><use href="#ra" x="116" y="951" width="8" height="8"/><use href="#ra" x="116" y="968" width="8" height="8"/><use href="#da" x="116" y="985" width="8" height="8"/><use href="#ra" x="99" y="1121" width="8" height="8"/><use href="#ra" x="82" y="1138" width="8" height="8"/><use href="#ra" x="65" y="1155" width="8" height="8"/><use href="#ra" x="65" y="1172" width="8" height="8"/><use href="#ra" x="65" y="1189" width="7" height="7"/>
<use href="#st" x="128" y="626" width="12" height="12"/><use href="#st" x="128" y="643" width="12" height="12"/><use href="#st" x="128" y="898" width="12" height="12"/>
<use href="#sw" x="147" y="744" width="12" height="13"/><use href="#sw" x="147" y="761" width="12" height="13"/><use href="#sw" x="147" y="778" width="12" height="13"/><use href="#sw" x="147" y="795" width="12" height="13"/><use href="#sw" x="147" y="812" width="12" height="13"/><use href="#sw" x="147" y="829" width="12" height="13"/><use href="#sw" x="147" y="846" width="12" height="13"/>
<use href="#sw" x="147" y="999" width="12" height="13"/><use href="#sw" x="147" y="1016" width="12" height="13"/><use href="#swb" x="147" y="1033" width="12" height="13"/><use href="#sw" x="147" y="1050" width="12" height="13"/><use href="#sw" x="147" y="1067" width="12" height="13"/><use href="#sw" x="147" y="1084" width="12" height="13"/><use href="#sw" x="147" y="1101" width="12" height="13"/>
<rect x="146" y="1032" width="15" height="16" fill="none" stroke="#3a3a3a"/>
<path d="M167 1035V1046H178M168 1043L171 1039L174 1042L177 1037" fill="none" stroke="#999"/>
<path d="M6 1035V1045L1 1040Z" fill="#4a4a4a"/><path d="M18 1036L22 1040L18 1044L14 1040Z" fill="none" stroke="#aaa"/><path d="M31 1035V1045L37 1040Z" fill="#b8b8b8"/>
<use href="#add" x="469" y="660" width="11" height="11"/><use href="#add" x="469" y="915" width="11" height="11"/>
<use href="#pth" x="352" y="693" width="29" height="14"/><use href="#pth" x="352" y="948" width="29" height="14"/>
<use href="#lnk" x="351" y="778" width="13" height="13"/><use href="#lnk" x="351" y="1033" width="13" height="13"/>
<use href="#ch" x="467" y="680" width="8" height="6"/><use href="#ch" x="467" y="714" width="8" height="6"/><use href="#ch" x="467" y="867" width="8" height="6"/><use href="#ch" x="467" y="935" width="8" height="6"/><use href="#ch" x="467" y="969" width="8" height="6"/><use href="#ch" x="467" y="1122" width="8" height="6"/>
<g id="s1"><use href="#sh" x="351" y="625" width="13" height="13"/><use href="#sun" x="366" y="625" width="13" height="13"/><use href="#sl" x="381" y="625" width="13" height="13"/><use href="#ch" x="546" y="630" width="8" height="6"/><use href="#ch" x="635" y="630" width="8" height="6"/><use href="#spi" x="656" y="625" width="12" height="13"/><use href="#ch" x="752" y="630" width="8" height="6"/></g>
<use href="#s1" y="17"/><use href="#s1" y="272"/><use href="#s1" y="527"/><use href="#s1" y="544"/><use href="#s1" y="561"/>
</svg>

<!-- bottom bar -->
<div style="left:0;top:1196px;width:1660px;height:1px;background:#050505"></div>
<div style="left:0;top:1197px;width:1660px;height:16px;background:#1c1c1c"></div>
<div style="left:0;top:1213px;width:1660px;height:1px;background:#2d8ceb"></div>
<div style="left:0;top:1214px;width:1660px;height:2px;background:#3b3440"></div>
<div style="left:893px;top:1198px;width:199px;height:15px;background:#2e2e2e;border-radius:7px"></div>
<svg style="left:0;top:1196px" width="900" height="17">
<path d="M1 3H7V10H1ZM4 6H10V13H4Z" fill="none" stroke="#2d8ceb"/><circle cx="22" cy="7" r="4" fill="none" stroke="#2d8ceb"/><path d="M22 8H28V14H22Z" fill="none" stroke="#2d8ceb"/>
<path d="M36 4V13M44 4V13" stroke="#999"/><path d="M37 4L41 2V15L37 13Z" fill="#999"/><path d="M43 4L40 2V15L43 13Z" fill="#999"/>
<path d="M791 10H800L796 6Z" fill="#aaa"/><rect x="791" y="10" width="9" height="1.500" fill="#aaa"/>
<rect x="816" y="8" width="36" height="2" fill="#4a4a4a"/><ellipse cx="851" cy="9.500" rx="4" ry="4.500" fill="#1c1c1c" stroke="#999" stroke-width="1.500"/>
<path d="M871 13L875 6L878 11L881 3L887 13Z" fill="#bbb"/>
</svg>
</div></body></html>
